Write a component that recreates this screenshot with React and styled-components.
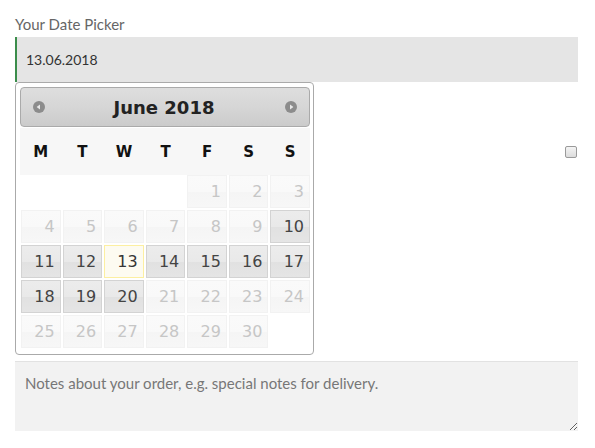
import React from 'react'
import styled, { createGlobalStyle } from 'styled-components'

const GlobalStyle = createGlobalStyle`
  html, body {
    margin: 0;
    padding: 0;
    background: #fff;
  }
  body {
    font-family: Lato, "Liberation Sans", sans-serif;
  }
`

const weekdays = ['M', 'T', 'W', 'T', 'F', 'S', 'S']

// June 2018 starts on a Friday; 10..20 selectable, 13 is today
const days = [
  null, null, null, null, 1, 2, 3,
  4, 5, 6, 7, 8, 9, 10,
  11, 12, 13, 14, 15, 16, 17,
  18, 19, 20, 21, 22, 23, 24,
  25, 26, 27, 28, 29, 30, null,
]

const cellState = (d) => {
  if (d === 13) return 'today'
  if (d >= 10 && d <= 20) return 'default'
  return 'disabled'
}

const Arrow = ({ dir }) => (
  <svg width="12" height="12" viewBox="0 0 12 12">
    <circle cx="6" cy="6" r="6" fill="#8c8c8c" />
    {dir === 'prev'
      ? <path d="M3.6 6 L7 3.6 L7 8.4 Z" fill="#e8e8e8" />
      : <path d="M8.4 6 L5 3.6 L5 8.4 Z" fill="#e8e8e8" />}
  </svg>
)

const App = () => {
  return (
    <Page>
      <GlobalStyle />
      <Label>Your Date Picker</Label>
      <FieldWrap>
        <DateInput type="text" defaultValue="13.06.2018" />
        <Picker>
          <Header>
            <NavButton><Arrow dir="prev" /></NavButton>
            <Title>June 2018</Title>
            <NavButton><Arrow dir="next" /></NavButton>
          </Header>
          <WeekRow>
            {weekdays.map((w, i) => <WeekDay key={i}>{w}</WeekDay>)}
          </WeekRow>
          <DayGrid>
            {days.map((d, i) =>
              d === null
                ? <Empty key={i} />
                : <Day key={i} $state={cellState(d)}>{d}</Day>
            )}
          </DayGrid>
        </Picker>
      </FieldWrap>
      <Middle>
        <Check type="checkbox" />
      </Middle>
      <Notes placeholder="Notes about your order, e.g. special notes for delivery." />
    </Page>
  )
}

export default App

const Page = styled.div`
  width: 563px;
  padding: 14px 0 0 15px;
`

const Label = styled.div`
  font-size: 15px;
  line-height: 20px;
  color: #666;
`

const FieldWrap = styled.div`
  position: relative;
  margin-top: 3px;
`

const DateInput = styled.input`
  display: block;
  box-sizing: border-box;
  width: 100%;
  height: 45px;
  margin: 0;
  padding: 0 0 0 9px;
  border: none;
  border-left: 2px solid #3b8d4b;
  background: #e5e5e5;
  font-family: Lato, "Liberation Sans", sans-serif;
  font-size: 14px;
  color: #333;
  outline: none;
`

const Picker = styled.div`
  position: absolute;
  top: 100%;
  left: 0;
  z-index: 2;
  box-sizing: border-box;
  width: 299px;
  padding: 4px 3px 6px 4px;
  border: 1px solid #aaa;
  border-radius: 4px;
  background: #fff;
  font-family: "DejaVu Sans", Verdana, sans-serif;
`

const Header = styled.div`
  box-sizing: border-box;
  height: 40px;
  display: flex;
  align-items: center;
  justify-content: space-between;
  padding: 0 12px 0 12px;
  border: 1px solid #aaa;
  border-radius: 4px;
  background: linear-gradient(to bottom, #dedede 0%, #d6d6d6 50%, #cbcbcb 100%);
`

const NavButton = styled.span`
  display: flex;
  width: 12px;
  height: 12px;
`

const Title = styled.div`
  font-weight: bold;
  font-size: 18px;
  color: #222;
  margin-left: -2px;
`

const WeekRow = styled.div`
  margin-top: 1px;
  height: 47px;
  display: grid;
  grid-template-columns: repeat(7, 1fr);
  align-items: center;
  padding-left: 1px;
  column-gap: 2px;
  background: #f7f7f7;
`

const WeekDay = styled.div`
  text-align: center;
  font-weight: bold;
  font-size: 15px;
  color: #111;
`

const DayGrid = styled.div`
  display: grid;
  grid-template-columns: repeat(7, 1fr);
  grid-auto-rows: 33px;
  column-gap: 2px;
  row-gap: 2px;
  padding-left: 1px;
`

const Empty = styled.div``

const Day = styled.div`
  box-sizing: border-box;
  display: flex;
  align-items: center;
  justify-content: flex-end;
  padding-right: 5px;
  font-size: 16px;
  border: 1px solid ${({ $state }) =>
    $state === 'today' ? '#fcefa1' : $state === 'disabled' ? '#f2f2f2' : '#d3d3d3'};
  background: ${({ $state }) =>
    $state === 'today'
      ? '#fdfbf1'
      : $state === 'disabled'
        ? 'linear-gradient(to bottom, #fafafa 0%, #f9f9f9 50%, #f5f5f5 51%, #f7f7f7 100%)'
        : 'linear-gradient(to bottom, #ececec 0%, #e9e9e9 50%, #e1e1e1 51%, #e5e5e5 100%)'};
  color: ${({ $state }) =>
    $state === 'today' ? '#363636' : $state === 'disabled' ? '#c6c6c6' : '#444'};
`

const Middle = styled.div`
  height: 279px;
  display: flex;
  justify-content: flex-end;
  align-items: flex-start;
`

const Check = styled.input`
  appearance: none;
  box-sizing: border-box;
  width: 12px;
  height: 12px;
  margin: 64px 1px 0 0;
  border: 1px solid #9a9a9a;
  border-radius: 2px;
  background: linear-gradient(to bottom, #f4f4f4, #dcdcdc);
`

const Notes = styled.textarea`
  display: block;
  box-sizing: border-box;
  width: 100%;
  height: 70px;
  margin: 0;
  padding: 12px 10px;
  border: none;
  border-top: 1px solid #e2e2e2;
  background: #f2f2f2;
  font-family: Lato, "Liberation Sans", sans-serif;
  font-size: 15px;
  color: #333;
  outline: none;
  &::placeholder {
    color: #777;
  }
`
